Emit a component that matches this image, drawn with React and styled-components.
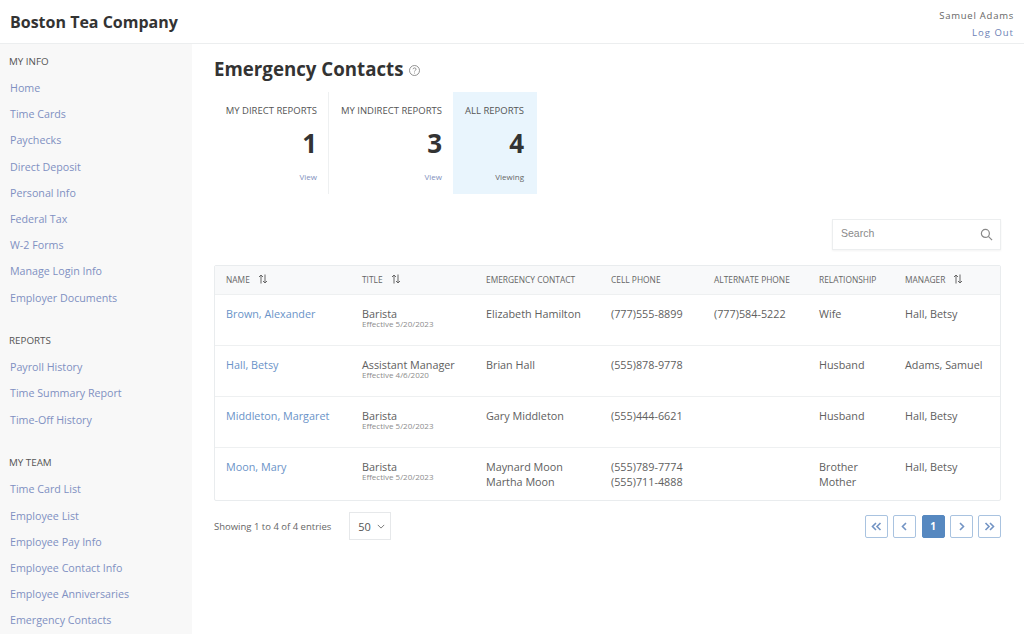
import React from "react";
import styled, { createGlobalStyle } from "styled-components";

const Global = createGlobalStyle`
  html, body { margin: 0; padding: 0; background: #fff; overflow: hidden; }
  body { font-family: "Open Sans", "Noto Sans", sans-serif; color: #444; }
  * { box-sizing: border-box; }
`;

const Page = styled.div`
  width: 1024px; height: 634px; overflow: hidden; display: flex; flex-direction: column;
`;
const Header = styled.header`
  height: 44px; flex: none; display: flex; justify-content: space-between; border-bottom: 1px solid #eceeef; padding: 0 10px;
`;
const Brand = styled.div`
  font-size: 16px; font-weight: 700; color: #333; line-height: 44px; letter-spacing: 0;
`;
const UserBox = styled.div`
  display: flex; flex-direction: column; align-items: flex-end; padding: 8px 0 0; font-size: 9.5px; letter-spacing: 0.75px; line-height: 16px; color: #666;
`;
const LogOut = styled.a`
  color: #6c7fb5; margin-top: 1px; letter-spacing: 1px;
`;
const Body = styled.div`
  flex: 1; display: flex; min-height: 0;
`;
const Side = styled.aside`
  width: 192px; flex: none; background: #f8f8f8; padding: 11px 0 0 10px;
`;
const SideSection = styled.div`
  margin-bottom: 23.6px;
`;
const SideTitle = styled.div`
  font-size: 9.8px; color: #555; line-height: 14px; margin: 0 0 6px -1px; height: 14px;
`;
const SideLink = styled.a`
  display: block; font-size: 10.7px; color: #8090c2; line-height: 26.2px; height: 26.2px;
`;
const Main = styled.main`
  flex: 1; padding: 11px 23px 0 22px; min-width: 0;
`;
const TitleRow = styled.div`
  display: flex; align-items: center; gap: 5px; height: 28px;
`;
const Title = styled.h1`
  margin: 0; font-size: 18.7px; font-weight: 700; color: #333; line-height: 28px;
`;
const Stats = styled.div`
  display: flex; margin-top: 9px; height: 102px;
`;
const Stat = styled.div`
  width: ${p => p.$w}px; padding: 12px ${p => p.$pr}px 0 0; text-align: right; display: flex; flex-direction: column; align-items: flex-end;
  background: ${p => p.$active ? "#e9f5fd" : "transparent"};
  border-right: ${p => p.$line ? "1px solid #eef0f1" : "0"};
`;
const StatLabel = styled.div`
  font-size: 9.5px; line-height: 14px; color: #555; white-space: nowrap;
`;
const StatNum = styled.div`
  font-size: 26px; font-weight: 700; color: #333; line-height: 36px; margin-top: 7px;
`;
const StatLink = styled.div`
  font-size: 8px; line-height: 12px; margin-top: 10px; color: ${p => p.$plain ? "#666" : "#8190bd"};
`;
const SearchRow = styled.div`
  display: flex; justify-content: flex-end; margin-top: 25px;
`;
const SearchBox = styled.div`
  width: 169px; height: 31px; border: 1px solid #eceeef; box-shadow: 0 1px 2px rgba(0,0,0,.05); display: flex; justify-content: space-between; padding: 7px 7px 0 8px; font-family: "Liberation Sans", sans-serif; font-size: 10.5px; color: #8a8a8a;
`;
const Table = styled.div`
  margin-top: 15px; border: 1px solid #e9ecee; border-radius: 2px;
`;
const cols = "147px 124px 125px 103px 105px 86px 1fr";
const HeadRow = styled.div`
  display: grid; grid-template-columns: ${cols}; height: 29px; padding-bottom: 2px; background: #f8f9fa; border-bottom: 1px solid #eef0f1; align-items: center;
`;
const HeadCell = styled.div`
  font-size: 8.4px; color: #666; padding-left: ${p => p.$first ? 11 : 0}px; display: flex; align-items: center; gap: 8px; white-space: nowrap;
`;
const Row = styled.div`
  display: grid; grid-template-columns: ${cols}; height: ${p => p.$h}px; padding-top: 11px; border-bottom: ${p => p.$last ? 0 : "1px solid #eef0f1"};
`;
const Cell = styled.div`
  font-size: 10.8px; line-height: 15px; color: #606060; white-space: nowrap;
`;
const NameCell = styled(Cell)`
  color: #6a93c8; padding-left: 11px;
`;
const Sub = styled.div`
  font-size: 8px; line-height: 9px; color: #8c8c8c; margin-top: -2px;
`;
const Footer = styled.div`
  display: flex; align-items: center; justify-content: space-between; margin-top: 11px; height: 28px;
`;
const Left = styled.div`
  display: flex; align-items: center; gap: 18px; font-size: 9.5px; color: #666;
`;
const Size = styled.div`
  width: 42px; height: 28px; border: 1px solid #e6e8ea; display: flex; align-items: center; justify-content: space-between; padding: 0 5px 0 8px; font-size: 11px; color: #555;
`;
const Pager = styled.div`
  display: flex; gap: 5.25px;
`;
const PageBtn = styled.div`
  width: 23px; height: 23px; border: 1px solid ${p => p.$on ? "#5688c0" : "#a9c3e0"}; border-radius: 2px; background: ${p => p.$on ? "#5688c0" : "#fff"};
  color: ${p => p.$on ? "#fff" : "#6f8fc0"}; display: flex; align-items: center; justify-content: center; font-size: 10px; font-weight: 700;
`;

const Sort = () => (
  <svg width="10" height="10" viewBox="0 0 10 10" fill="none" stroke="#666" strokeWidth="1">
    <path d="M3 9.5V1M1 3l2-2 2 2M7 .5V9M5 7l2 2 2-2" />
  </svg>
);
const Chev = ({ d }) => (
  <svg width="11" height="9" viewBox="0 0 11 9" fill="none" stroke="#7394c4" strokeWidth="1.6"><path d={d} /></svg>
);

const nav = [
  ["MY INFO", ["Home","Time Cards","Paychecks","Direct Deposit","Personal Info","Federal Tax","W-2 Forms","Manage Login Info","Employer Documents"]],
  ["REPORTS", ["Payroll History","Time Summary Report","Time-Off History"]],
  ["MY TEAM", ["Time Card List","Employee List","Employee Pay Info","Employee Contact Info","Employee Anniversaries","Emergency Contacts"]],
];
const rows = [
  { h: 51, n: "Brown, Alexander", t: "Barista", e: "Effective 5/20/2023", c: ["Elizabeth Hamilton"], p: ["(777)555-8899"], a: "(777)584-5222", r: ["Wife"], m: "Hall, Betsy" },
  { h: 51, n: "Hall, Betsy", t: "Assistant Manager", e: "Effective 4/6/2020", c: ["Brian Hall"], p: ["(555)878-9778"], a: "", r: ["Husband"], m: "Adams, Samuel" },
  { h: 51, n: "Middleton, Margaret", t: "Barista", e: "Effective 5/20/2023", c: ["Gary Middleton"], p: ["(555)444-6621"], a: "", r: ["Husband"], m: "Hall, Betsy" },
  { h: 52, n: "Moon, Mary", t: "Barista", e: "Effective 5/20/2023", c: ["Maynard Moon","Martha Moon"], p: ["(555)789-7774","(555)711-4888"], a: "", r: ["Brother","Mother"], m: "Hall, Betsy" },
];
const Lines = ({ v }) => v.map(x => <div key={x}>{x}</div>);

export default function App() {
  return (
    <Page>
      <Global />
      <Header>
        <Brand>Boston Tea Company</Brand>
        <UserBox><span>Samuel Adams</span><LogOut>Log Out</LogOut></UserBox>
      </Header>
      <Body>
        <Side>
          {nav.map(([t, items]) => (
            <SideSection key={t}>
              <SideTitle>{t}</SideTitle>
              {items.map(i => <SideLink key={i}>{i}</SideLink>)}
            </SideSection>
          ))}
        </Side>
        <Main>
          <TitleRow>
            <Title>Emergency Contacts</Title>
            <svg width="11" height="11" viewBox="0 0 11 11" fill="none" stroke="#777" strokeWidth=".8" style={{ marginTop: 3 }}>
              <circle cx="5.5" cy="5.5" r="5" /><path d="M4 4.2c.2-1.8 3.1-1.7 3.1 0 0 1.1-1.5 1.1-1.6 2.3M5.5 7.6v.9" />
            </svg>
          </TitleRow>
          <Stats>
            <Stat $w={115} $pr={11} $line><StatLabel>MY DIRECT REPORTS</StatLabel><StatNum>1</StatNum><StatLink>View</StatLink></Stat>
            <Stat $w={124} $pr={11}><StatLabel>MY INDIRECT REPORTS</StatLabel><StatNum>3</StatNum><StatLink>View</StatLink></Stat>
            <Stat $w={84} $pr={13} $active><StatLabel>ALL REPORTS</StatLabel><StatNum>4</StatNum><StatLink $plain>Viewing</StatLink></Stat>
          </Stats>
          <SearchRow>
            <SearchBox>
              <span>Search</span>
              <svg width="13" height="13" viewBox="0 0 14 14" fill="none" stroke="#888" strokeWidth="1.3" style={{ marginTop: 1 }}>
                <circle cx="5.8" cy="5.8" r="4.3" /><path d="M9 9l4 4" />
              </svg>
            </SearchBox>
          </SearchRow>
          <Table>
            <HeadRow>
              <HeadCell $first>NAME <Sort /></HeadCell>
              <HeadCell>TITLE <Sort /></HeadCell>
              <HeadCell>EMERGENCY CONTACT</HeadCell>
              <HeadCell>CELL PHONE</HeadCell>
              <HeadCell>ALTERNATE PHONE</HeadCell>
              <HeadCell>RELATIONSHIP</HeadCell>
              <HeadCell>MANAGER <Sort /></HeadCell>
            </HeadRow>
            {rows.map((r, i) => (
              <Row key={r.n} $h={r.h} $last={i === rows.length - 1}>
                <NameCell>{r.n}</NameCell>
                <Cell>{r.t}<Sub>{r.e}</Sub></Cell>
                <Cell><Lines v={r.c} /></Cell>
                <Cell><Lines v={r.p} /></Cell>
                <Cell>{r.a}</Cell>
                <Cell><Lines v={r.r} /></Cell>
                <Cell>{r.m}</Cell>
              </Row>
            ))}
          </Table>
          <Footer>
            <Left>
              <span>Showing 1 to 4 of 4 entries</span>
              <Size>50
                <svg width="8" height="5" viewBox="0 0 10 6" fill="none" stroke="#777" strokeWidth="1.2"><path d="M1 1l4 4 4-4" /></svg>
              </Size>
            </Left>
            <Pager>
              <PageBtn><Chev d="M5 1L1.5 4.5 5 8M9.5 1L6 4.5 9.5 8" /></PageBtn>
              <PageBtn><Chev d="M7 1L3.5 4.5 7 8" /></PageBtn>
              <PageBtn $on>1</PageBtn>
              <PageBtn><Chev d="M4 1l3.5 3.5L4 8" /></PageBtn>
              <PageBtn><Chev d="M1.5 1L5 4.5 1.5 8M6 1l3.5 3.5L6 8" /></PageBtn>
            </Pager>
          </Footer>
        </Main>
      </Body>
    </Page>
  );
}
